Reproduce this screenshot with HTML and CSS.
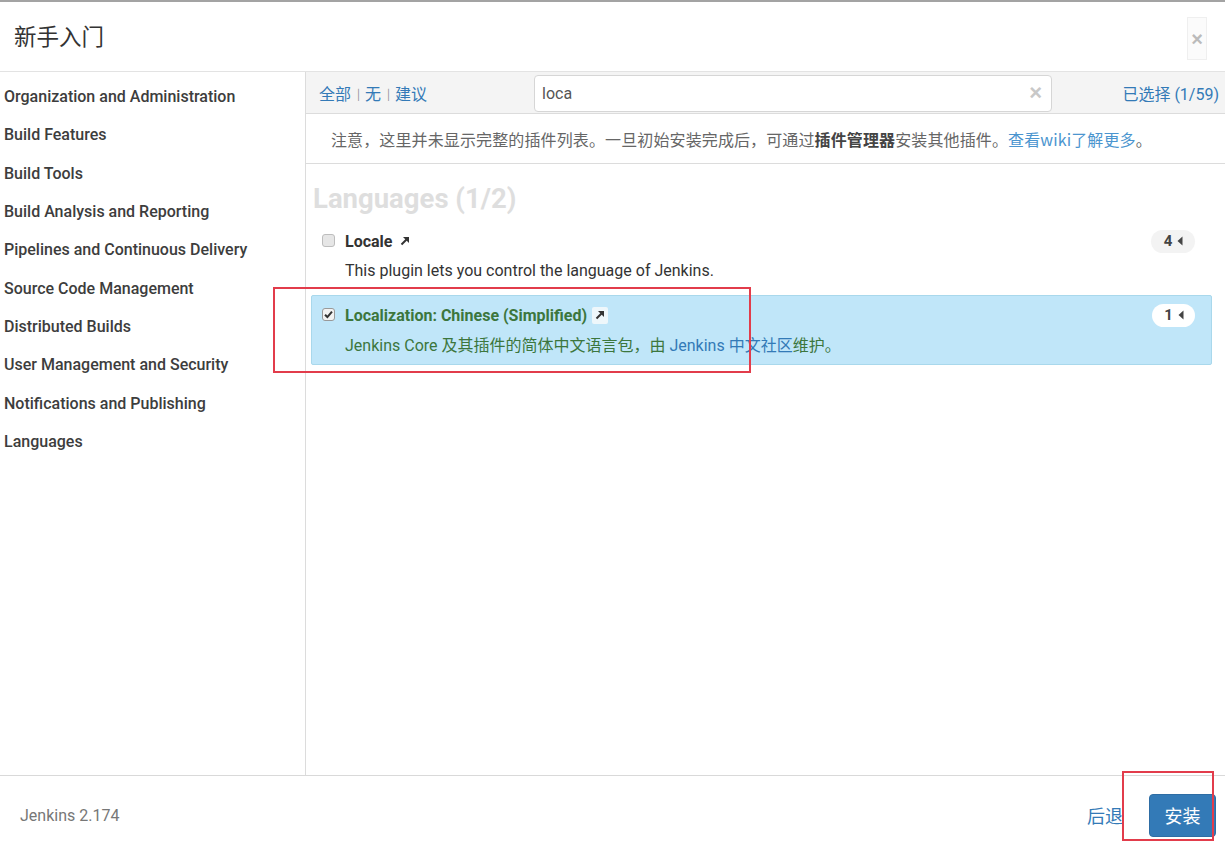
FILE: index.html
```html
<!DOCTYPE html>
<html lang="zh-CN">
<head>
<meta charset="utf-8">
<title>新手入门</title>
<link rel="stylesheet" href="styles.css">
</head>
<body>
<div class="wizard">
  <header class="wiz-header">
    <h1 class="wiz-title">新手入门</h1>
    <button class="close-btn" type="button">×</button>
  </header>
  <div class="wiz-body">
    <nav class="categories">
      <ul class="cat-list">
        <li>Organization and Administration</li>
        <li>Build Features</li>
        <li>Build Tools</li>
        <li>Build Analysis and Reporting</li>
        <li>Pipelines and Continuous Delivery</li>
        <li>Source Code Management</li>
        <li>Distributed Builds</li>
        <li>User Management and Security</li>
        <li>Notifications and Publishing</li>
        <li>Languages</li>
      </ul>
    </nav>
    <section class="plugins">
      <div class="toolbar">
        <div class="selectors">
          <a class="link">全部</a><span class="sep">|</span><a class="link">无</a><span class="sep">|</span><a class="link">建议</a>
        </div>
        <div class="search">
          <span class="search-text">loca</span>
          <span class="search-clear">×</span>
        </div>
        <div class="selected-count"><a class="link">已选择</a> (1/59)</div>
      </div>
      <div class="notice">注意，这里并未显示完整的插件列表。一旦初始安装完成后，可通过<b>插件管理器</b>安装其他插件。<a class="link light">查看wiki了解更多</a>。</div>
      <div class="plugin-list">
        <h2 class="group-title">Languages (1/2)</h2>
        <div class="plugin">
          <div class="plugin-head">
            <span class="cb"></span>
            <span class="plugin-name">Locale</span>
            <span class="ext"><svg viewBox="0 0 12 12" width="12" height="12"><path d="M2.5 9.5 L9 3" stroke="currentColor" stroke-width="2" fill="none"/><path d="M4 2 H10 V8 Z" fill="currentColor"/></svg></span>
            <span class="badge">4 <svg viewBox="0 0 6 10" width="6" height="10"><path d="M5.5 0.5 L0.5 5 L5.5 9.5 Z" fill="currentColor"/></svg></span>
          </div>
          <p class="plugin-desc">This plugin lets you control the language of Jenkins.</p>
        </div>
        <div class="plugin selected">
          <div class="plugin-head">
            <span class="cb checked"><svg viewBox="0 0 12 12" width="11" height="11"><path d="M2.2 6.2 L4.8 8.8 L9.8 2.8" stroke="#333" stroke-width="2.2" fill="none"/></svg></span>
            <span class="plugin-name">Localization: Chinese (Simplified)</span>
            <span class="ext boxed"><svg viewBox="0 0 12 12" width="12" height="12"><path d="M2.5 9.5 L9 3" stroke="currentColor" stroke-width="2" fill="none"/><path d="M4 2 H10 V8 Z" fill="currentColor"/></svg></span>
            <span class="badge">1 <svg viewBox="0 0 6 10" width="6" height="10"><path d="M5.5 0.5 L0.5 5 L5.5 9.5 Z" fill="currentColor"/></svg></span>
          </div>
          <p class="plugin-desc">Jenkins Core 及其插件的简体中文语言包，由 <a class="link">Jenkins 中文社区</a>维护。</p>
        </div>
      </div>
    </section>
  </div>
  <footer class="wiz-footer">
    <span class="version">Jenkins 2.174</span>
    <div class="actions">
      <a class="link back">后退</a>
      <button class="install-btn" type="button">安装</button>
    </div>
  </footer>
  <div class="annot annot-plugin"></div>
  <div class="annot annot-install"></div>
</div>
</body>
</html>
```
FILE: styles.css
```css
* { box-sizing: border-box; }
html, body { margin: 0; padding: 0; background: #fff; }
body {
  font-family: Roboto, "Noto Sans CJK SC", "Liberation Sans", sans-serif;
  color: #333;
  font-size: 16px;
}
.wizard {
  position: relative;
  width: 1225px;
  height: 846px;
  border-top: 2px solid #a3a3a3;
  display: flex;
  flex-direction: column;
}
.wiz-header {
  height: 70px;
  border-bottom: 1px solid #e3e3e3;
  display: flex;
  align-items: center;
  justify-content: space-between;
  padding: 0 18px 0 14px;
}
.wiz-title {
  margin: 0;
  font-family: "Noto Sans CJK SC", sans-serif;
  font-weight: 400;
  font-size: 22.5px;
  color: #333;
  margin-top: -3px;
}
.close-btn {
  width: 20px;
  height: 43px;
  border: 1px solid #efefef;
  background: #fbfbfb;
  color: #bbb;
  font-size: 20px;
  font-weight: 700;
  padding: 0;
  margin-top: 4px;
  font-family: "Liberation Sans", sans-serif;
  line-height: 1;
}
.wiz-body {
  height: 703px;
  display: flex;
}
.categories {
  width: 306px;
  border-right: 1px solid #dcdcdc;
  background: #fff;
}
.cat-list {
  list-style: none;
  margin: 0;
  padding: 6px 0 0 4px;
}
.cat-list li {
  height: 38.33px;
  line-height: 38.33px;
  font-weight: 500;
  font-size: 16px;
  color: #3d3d3d;
  white-space: nowrap;
}
.plugins {
  flex: 1;
  display: flex;
  flex-direction: column;
  min-width: 0;
}
.link { color: #337ab7; text-decoration: none; cursor: pointer; }
.link.light { color: #4b95cf; }
.toolbar {
  height: 42px;
  background: #f4f4f4;
  border-bottom: 1px solid #dcdcdc;
  display: flex;
  align-items: center;
  padding: 0 6px 0 13px;
}
.selectors {
  font-family: "Noto Sans CJK SC", sans-serif;
  font-size: 16px;
  width: 215px;
  display: flex;
  align-items: center;
}
.sep {
  color: #888;
  font-size: 11px;
  margin: 0 5px 0 6px;
}
.search {
  width: 518px;
  height: 37px;
  background: #fff;
  border: 1px solid #d6d6d6;
  border-radius: 4px;
  display: flex;
  align-items: center;
  justify-content: space-between;
  padding: 0 9px 0 7px;
  margin-top: 1px;
}
.search-text { color: #555; font-size: 16px; }
.search-clear {
  color: #c8c8c8;
  font-family: "Liberation Sans", sans-serif;
  font-weight: 700;
  font-size: 22px;
  line-height: 1;
}
.selected-count {
  flex: 1;
  text-align: right;
  font-size: 16px;
  color: #337ab7;
}
.selected-count .link { font-family: "Noto Sans CJK SC", sans-serif; }
.notice {
  height: 50px;
  border-bottom: 1px solid #dcdcdc;
  padding: 0 0 0 25px;
  display: flex;
  align-items: center;
  font-family: "Noto Sans CJK SC", sans-serif;
  font-size: 16px;
  letter-spacing: 0.12px;
  color: #666;
  white-space: nowrap;
}
.notice b { color: #444; font-weight: 700; }
.plugin-list {
  padding: 15px 13px 0 5px;
}
.group-title {
  margin: 0 0 2px 2px;
  font-size: 27.5px;
  font-weight: 700;
  color: #dedede;
  line-height: 40px;
}
.plugin {
  height: 70px;
  margin-bottom: 4px;
  padding: 8px 16px 0 10px;
  border: 1px solid transparent;
  border-radius: 2px;
}
.plugin.selected {
  background: #c0e6f9;
  border-color: #a9d8ec;
}
.plugin-head {
  display: flex;
  align-items: center;
  height: 22px;
}
.cb {
  width: 13px;
  height: 13px;
  border: 1px solid #bdbdbd;
  border-radius: 3px;
  background: #e6e6e6;
  margin-right: 10px;
  display: inline-flex;
  align-items: center;
  justify-content: center;
  margin-top: -2px;
}
.cb.checked { background: #f2f2f2; border-color: #999; }
.plugin-name {
  font-weight: 700;
  font-size: 16px;
  color: #333;
}
.selected .plugin-name { color: #3c763d; }
.ext {
  display: inline-flex;
  align-items: center;
  justify-content: center;
  width: 16px;
  height: 17px;
  margin-left: 5px;
  color: #333;
}
.ext.boxed { background: #eef7fb; border-radius: 2px; }
.badge {
  margin-left: auto;
  height: 23px;
  width: 44px;
  border-radius: 12px;
  background: #f3f3f3;
  display: inline-flex;
  align-items: center;
  justify-content: center;
  gap: 5px;
  font-weight: 700;
  font-size: 15px;
  color: #444;
  padding-left: 1px;
}
.selected .badge { background: #fff; width: 43px; }
.plugin-desc {
  margin: 8px 0 0 23px;
  font-size: 16px;
  line-height: 22px;
  color: #333;
}
.selected .plugin-desc { margin-top: 9px; color: #3c763d; }
.wiz-footer {
  flex: 1;
  border-top: 1px solid #d9d9d9;
  display: flex;
  align-items: center;
  justify-content: space-between;
  padding: 0 9px 0 20px;
}
.version { color: #777; font-size: 16px; margin-top: 8px; }
.actions { display: flex; align-items: center; margin-top: 8px; }
.back {
  font-family: "Noto Sans CJK SC", sans-serif;
  font-size: 18px;
  margin-right: 26px;
}
.install-btn {
  width: 67px;
  height: 43px;
  background: #337ab7;
  color: #fff;
  border: 1px solid #2e6da4;
  border-radius: 4px;
  font-family: "Noto Sans CJK SC", sans-serif;
  font-size: 18px;
  padding: 0;
}
.annot {
  position: absolute;
  border: 2px solid #e23c4b;
  pointer-events: none;
}
.annot-plugin { left: 273px; top: 285px; width: 478px; height: 86px; }
.annot-install { left: 1122px; top: 769px; width: 92px; height: 70px; }
```
